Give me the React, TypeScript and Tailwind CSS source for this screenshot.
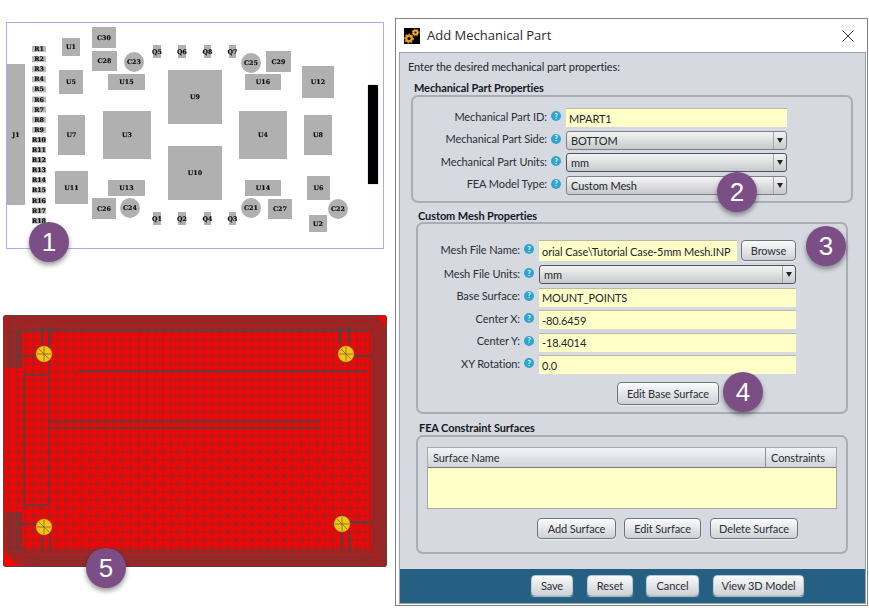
const uiFont = { fontFamily: 'Lato, "Open Sans", sans-serif' };

type Part = [string, number, number, number, number];

const parts: Part[] = [
  ["J1", 7, 64, 18, 141],
  ["U1", 62, 38, 18, 18],
  ["C30", 92, 27, 24, 21],
  ["C28", 92, 51, 25, 20],
  ["C29", 266, 51, 25, 21],
  ["U5", 59, 70, 24, 24],
  ["U15", 108, 74, 37, 16],
  ["U9", 168, 70, 54, 54],
  ["U16", 245, 74, 36, 16],
  ["U12", 302, 66, 32, 32],
  ["U7", 58, 115, 27, 40],
  ["U3", 103, 111, 48, 48],
  ["U4", 239, 111, 48, 48],
  ["U8", 304, 115, 28, 40],
  ["U10", 168, 146, 54, 54],
  ["U11", 55, 171, 33, 33],
  ["U13", 108, 180, 37, 16],
  ["U14", 245, 180, 36, 16],
  ["U6", 307, 176, 23, 24],
  ["C26", 92, 198, 24, 21],
  ["C27", 268, 199, 24, 20],
  ["U2", 309, 215, 18, 17],
  ["Q5", 153, 45, 8, 13],
  ["Q6", 178, 45, 8, 13],
  ["Q8", 204, 45, 7, 13],
  ["Q7", 229, 45, 7, 13],
  ["Q1", 153, 212, 8, 13],
  ["Q2", 178, 212, 8, 13],
  ["Q4", 204, 212, 7, 13],
  ["Q3", 229, 212, 7, 13],
];

const caps: [string, number, number][] = [
  ["C23", 134, 62],
  ["C25", 251, 63],
  ["C24", 130, 208],
  ["C21", 251, 208],
  ["C22", 338, 209],
];

const resistors = Array.from({ length: 18 }, (_, i) => i + 1);

function PcbLayout() {
  return (
    <svg width="378" height="227" viewBox="6 22 378 227" className="block">
      <rect x="6.5" y="22.5" width="377" height="226" fill="#fff" stroke="#a9a9f5" />
      <g style={{ filter: "blur(0.3px)" }} fontFamily='"DejaVu Serif", "Liberation Serif", serif' fontWeight="700" fontSize="6.3" textAnchor="middle" fill="#0c0c0c" stroke="#0c0c0c" strokeWidth="0.15">
        {parts.map(([name, x, y, w, h]) => (
          <g key={name}>
            <rect x={x} y={y} width={w} height={h} fill="#b0b0b0" stroke="none" />
            <text x={x + w / 2} y={y + h / 2 + 2}>{name}</text>
          </g>
        ))}
        {caps.map(([name, x, y]) => (
          <g key={name}>
            <circle cx={x} cy={y} r="10" fill="#b0b0b0" stroke="none" />
            <text x={x} y={y + 2}>{name}</text>
          </g>
        ))}
        {resistors.map((n) => {
          const y = 49 + (n - 1) * 10.1;
          return (
            <g key={n}>
              <rect x="32" y={y - 3} width="14" height="6" fill="#b8b8b8" stroke="none" />
              <text x="39" y={y + 2}>{"R" + n}</text>
            </g>
          );
        })}
        <rect x="368" y="85" width="10" height="99" fill="#000" />
      </g>
    </svg>
  );
}

const STEP_X = 8.1;
const STEP_Y = 8;

// horizontal and vertical edges of the triangle mesh
function buildGrid() {
  let d = "";
  for (let c = 0; c < 45; c++) d += `M${9 + c * STEP_X} 330V553`;
  for (let r = 0; r < 28; r++) d += `M5 ${332 + r * STEP_Y}H368`;
  return d;
}

function buildDiagonals() {
  let d = "";
  for (let c = 0; c < 44; c++) {
    for (let r = 0; r < 27; r++) {
      const x = 9 + c * STEP_X;
      const y = 332 + r * STEP_Y;
      const x2 = x + STEP_X;
      const y2 = y + STEP_Y;
      if (y < 440) {
        if (x < 200) d += `M${x} ${y}L${x2} ${y2}`;
        else d += `M${x} ${y2}L${x2} ${y}`;
      } else if ((c + r) % 2 === 0) {
        d += `M${x} ${y}L${x2} ${y2}`;
      } else {
        d += `M${x} ${y2}L${x2} ${y}`;
      }
    }
  }
  return d;
}

function buildBands() {
  let d = "";
  for (let i = 0; i < 8; i++) {
    const o = 1 + i * 2.1;
    const rr = Math.max(17 - o, 2);
    const rb = Math.max(22 - o, 3);
    d += `M${5 + o} 368V${315 + o}H${386 - o - rr}A${rr} ${rr} 0 0 1 ${386 - o} ${315 + o + rr}V${566 - o}H${5 + o + rb}A${rb} ${rb} 0 0 1 ${5 + o} ${566 - o - rb}V512`;
  }
  return d;
}

const screws: [number, number][] = [[44, 354], [346, 354], [44, 527], [342, 524]];

function FeaMesh() {
  return (
    <svg width="384" height="252" viewBox="3 315 384 252" className="block">
      <rect x="3" y="315" width="384" height="252" rx="3" fill="#ff0000" />
      <g fill="none" stroke="#4f4343">
        <path d={buildDiagonals()} strokeWidth="0.45" />
        <path d={buildGrid()} strokeWidth="0.7" />
        <path d={buildBands()} strokeWidth="1.2" />
        <path d="M49 332V505M24 375V505M24 375H49M24 505H49M78 371H365M50 422H320M50 428H320" strokeWidth="1.3" />
        <path d="M42 326V345M50 326V345M18 356H37M340 326V345M349 326V345M354 356H372M342 533V551M350 533V551M350 522H370M18 524H36M42 535V551M50 535V551" strokeWidth="2.2" />
        <rect x="3.5" y="315.5" width="383" height="251" rx="3" strokeWidth="1" />
      </g>
      {screws.map(([x, y]) => (
        <g key={`${x}-${y}`}>
          <circle cx={x} cy={y} r="8" fill="#f4c51c" stroke="#a9820f" strokeWidth="0.5" />
          <path d={`M${x - 7} ${y}H${x + 7}M${x} ${y - 7}V${y + 7}M${x - 5} ${y - 5}L${x + 5} ${y + 5}`} stroke="#5b4a14" strokeWidth="0.6" />
        </g>
      ))}
    </svg>
  );
}

function Badge({ n, className }: { n: number; className: string }) {
  return (
    <div
      className={`absolute flex h-10 w-10 items-center justify-center rounded-full bg-[#7b4e85] text-[26px] text-white shadow-[0_3px_5px_rgba(0,0,0,0.4)] ${className}`}
      style={{ fontFamily: '"Liberation Sans", Arial, sans-serif' }}
    >
      {n}
    </div>
  );
}

function Help() {
  return (
    <span className="flex h-[10px] w-[10px] shrink-0 items-center justify-center rounded-full bg-[#2fa4cc] text-[7px] font-bold leading-none text-white">
      ?
    </span>
  );
}

function Label({ text, width }: { text: string; width: string }) {
  return (
    <div className={`flex shrink-0 items-center justify-end gap-[4px] pb-[3px] ${width}`}>
      <span className="whitespace-nowrap text-[#2b2f36]">{text}</span>
      <Help />
    </div>
  );
}

function TextBox({ value, className = "" }: { value: string; className?: string }) {
  return (
    <div className={`flex h-[19px] items-center overflow-hidden border-t border-[#b9b9a4] bg-[#ffffc8] pl-[3px] whitespace-nowrap text-[#23262b] ${className}`}>
      {value}
    </div>
  );
}

function Select({ value, dark = false }: { value: string; dark?: boolean }) {
  return (
    <div className={`flex h-[19px] flex-1 items-center rounded-[3px] border bg-gradient-to-b from-[#f4f4f4] to-[#c8c9cb] text-[#23262b] ${dark ? "border-[#4c5560]" : "border-[#7d8187]"}`}>
      <div className="flex-1 pl-[4px]">{value}</div>
      <div className="flex h-full w-[13px] items-center justify-center border-l border-[#a3a5a9]">
        <div className="h-0 w-0 border-x-[3.5px] border-t-[5px] border-x-transparent border-t-[#222]" />
      </div>
    </div>
  );
}

function Btn({ label, className = "" }: { label: string; className?: string }) {
  return (
    <div className={`flex items-center justify-center rounded-[4px] border border-[#70757c] bg-gradient-to-b from-[#fbfbfc] to-[#cfd1d6] whitespace-nowrap text-[#2b2f36] shadow-[0_1px_1px_rgba(255,255,255,0.6)] ${className}`}>
      {label}
    </div>
  );
}

function GroupTitle({ text, className }: { text: string; className: string }) {
  return <div className={`text-[11px] font-bold leading-[14px] text-[#15181d] ${className}`}>{text}</div>;
}

function Dialog() {
  const partRows = [
    { label: "Mechanical Part Side:", value: "BOTTOM" },
    { label: "Mechanical Part Units:", value: "mm", dark: true },
    { label: "FEA Model Type:", value: "Custom Mesh" },
  ];
  const meshRows = [
    { label: "Base Surface:", value: "MOUNT_POINTS" },
    { label: "Center X:", value: "-80.6459" },
    { label: "Center Y:", value: "-18.4014" },
    { label: "XY Rotation:", value: "0.0" },
  ];
  return (
    <div className="flex h-[588px] w-[473px] flex-col border border-[#7f8388] bg-white text-[11px] leading-none tracking-[-0.1px]" style={uiFont}>
      <div className="flex h-[33px] shrink-0 items-center pl-[8px] pr-[13px]">
        <svg width="16" height="16" viewBox="0 0 16 16" className="shrink-0">
          <rect width="16" height="16" fill="#000" />
          <circle cx="5" cy="10.5" r="2.8" fill="none" stroke="#e79a12" strokeWidth="2.4" />
          <circle cx="5" cy="10.5" r="4.3" fill="none" stroke="#e79a12" strokeWidth="1.2" strokeDasharray="1.6 1.6" />
          <circle cx="11.5" cy="4.5" r="2" fill="none" stroke="#f0aa1c" strokeWidth="2" />
          <circle cx="11.5" cy="4.5" r="3.4" fill="none" stroke="#f0aa1c" strokeWidth="1" strokeDasharray="1.4 1.4" />
        </svg>
        <div className="ml-[7px] flex-1 text-[13px] tracking-normal text-[#2a2a2a]" style={{ fontFamily: '"Open Sans", sans-serif' }}>
          Add Mechanical Part
        </div>
        <svg width="12" height="12" viewBox="0 0 12 12" stroke="#333" strokeWidth="1" fill="none">
          <path d="M0.5 0.5L11.5 11.5M11.5 0.5L0.5 11.5" />
        </svg>
      </div>

      <div className="mb-[1px] ml-[3px] mr-[1px] flex flex-1 flex-col border border-[#9aa0a8] bg-[#d6d9e0]">
        <div className="flex flex-1 flex-col">
          <div className="ml-[8px] mt-[8px] h-[14px] text-[#23262b]">Enter the desired mechanical part properties:</div>

          <GroupTitle text="Mechanical Part Properties" className="ml-[14px] mt-[6px]" />
          <div className="ml-[11px] mr-[12px] flex h-[108px] flex-col gap-[3.6px] rounded-[7px] border-2 border-[#a9adb5] pl-[4px] pt-[11px]">
            <div className="flex w-[370px] items-center gap-[5px]">
              <Label text="Mechanical Part ID:" width="w-[144px]" />
              <TextBox value="MPART1" className="flex-1" />
            </div>
            {partRows.map((row) => (
              <div key={row.label} className="flex w-[370px] items-center gap-[5px]">
                <Label text={row.label} width="w-[144px]" />
                <Select value={row.value} dark={row.dark} />
              </div>
            ))}
          </div>

          <GroupTitle text="Custom Mesh Properties" className="ml-[18px] mt-[6px]" />
          <div className="ml-[16px] mr-[17px] mt-[-1px] flex h-[192px] flex-col rounded-[7px] border-2 border-[#a9adb5] pl-[4px] pt-[16px]">
            <div className="flex w-[374px] items-center gap-[5px]">
              <Label text="Mesh File Name:" width="w-[112px]" />
              <TextBox value="orial Case\Tutorial Case-5mm Mesh.INP" className="h-[21px] w-[198px]" />
              <Btn label="Browse" className="ml-[-1px] h-[21px] w-[55px] border-[#9ba0a7]" />
            </div>
            <div className="mt-[4px] flex w-[374px] items-center gap-[5px]">
              <Label text="Mesh File Units:" width="w-[112px]" />
              <Select value="mm" dark />
            </div>
            <div className="mt-[3.6px] flex flex-col gap-[3.6px]">
              {meshRows.map((row) => (
                <div key={row.label} className="flex w-[374px] items-center gap-[5px]">
                  <Label text={row.label} width="w-[112px]" />
                  <TextBox value={row.value} className="flex-1" />
                </div>
              ))}
            </div>
            <Btn label="Edit Base Surface" className="ml-[195px] mt-[8px] h-[23px] w-[102px] border-[#3f7fb0] shadow-[0_0_2px_#5f9fcc]" />
          </div>

          <GroupTitle text="FEA Constraint Surfaces" className="ml-[19px] mt-[7px]" />
          <div className="ml-[16px] mr-[17px] flex h-[119px] flex-col rounded-[7px] border-2 border-[#a9adb5] px-[9px] pt-[10px]">
            <div className="flex h-[62px] w-[410px] flex-col border border-[#a6a9ae] bg-[#ffffc8]">
              <div className="flex h-[20px] shrink-0 items-center border-b border-[#767a80] bg-gradient-to-b from-[#f3f4f6] to-[#d0d3d9] text-[#2b2f36]">
                <div className="flex h-full flex-1 items-center pl-[5px]">Surface Name</div>
                <div className="flex h-full w-[71px] items-center border-l border-[#8a8e94] pl-[5px]">Constraints</div>
              </div>
            </div>
            <div className="ml-[110px] mt-[9px] flex gap-[8px]">
              <Btn label="Add Surface" className="h-[21px] w-[79px]" />
              <Btn label="Edit Surface" className="h-[21px] w-[77px]" />
              <Btn label="Delete Surface" className="ml-[1px] h-[21px] w-[88px]" />
            </div>
          </div>
        </div>

        <div className="flex h-[34px] shrink-0 items-center bg-[#255f82] pb-[1px] pl-[131px]">
          <Btn label="Save" className="h-[21px] w-[42px] border-[#b9c4cc]" />
          <Btn label="Reset" className="ml-[14px] h-[21px] w-[46px] border-[#b9c4cc]" />
          <Btn label="Cancel" className="ml-[13px] h-[21px] w-[53px] border-[#b9c4cc]" />
          <Btn label="View 3D Model" className="ml-[14px] h-[21px] w-[91px] border-[#b9c4cc]" />
        </div>
      </div>
    </div>
  );
}

export default function App() {
  return (
    <div className="relative flex h-[610px] w-[869px] overflow-hidden bg-white pt-[18px]">
      <div className="w-[395px] shrink-0">
        <div className="ml-[6px] mt-[4px]">
          <PcbLayout />
        </div>
        <div className="ml-[3px] mt-[66px]">
          <FeaMesh />
        </div>
      </div>
      <Dialog />
      <Badge n={1} className="left-[29px] top-[222px]" />
      <Badge n={5} className="left-[86px] top-[548px]" />
      <Badge n={2} className="left-[717px] top-[172px]" />
      <Badge n={3} className="left-[806px] top-[226px]" />
      <Badge n={4} className="left-[723px] top-[372px]" />
    </div>
  );
}
